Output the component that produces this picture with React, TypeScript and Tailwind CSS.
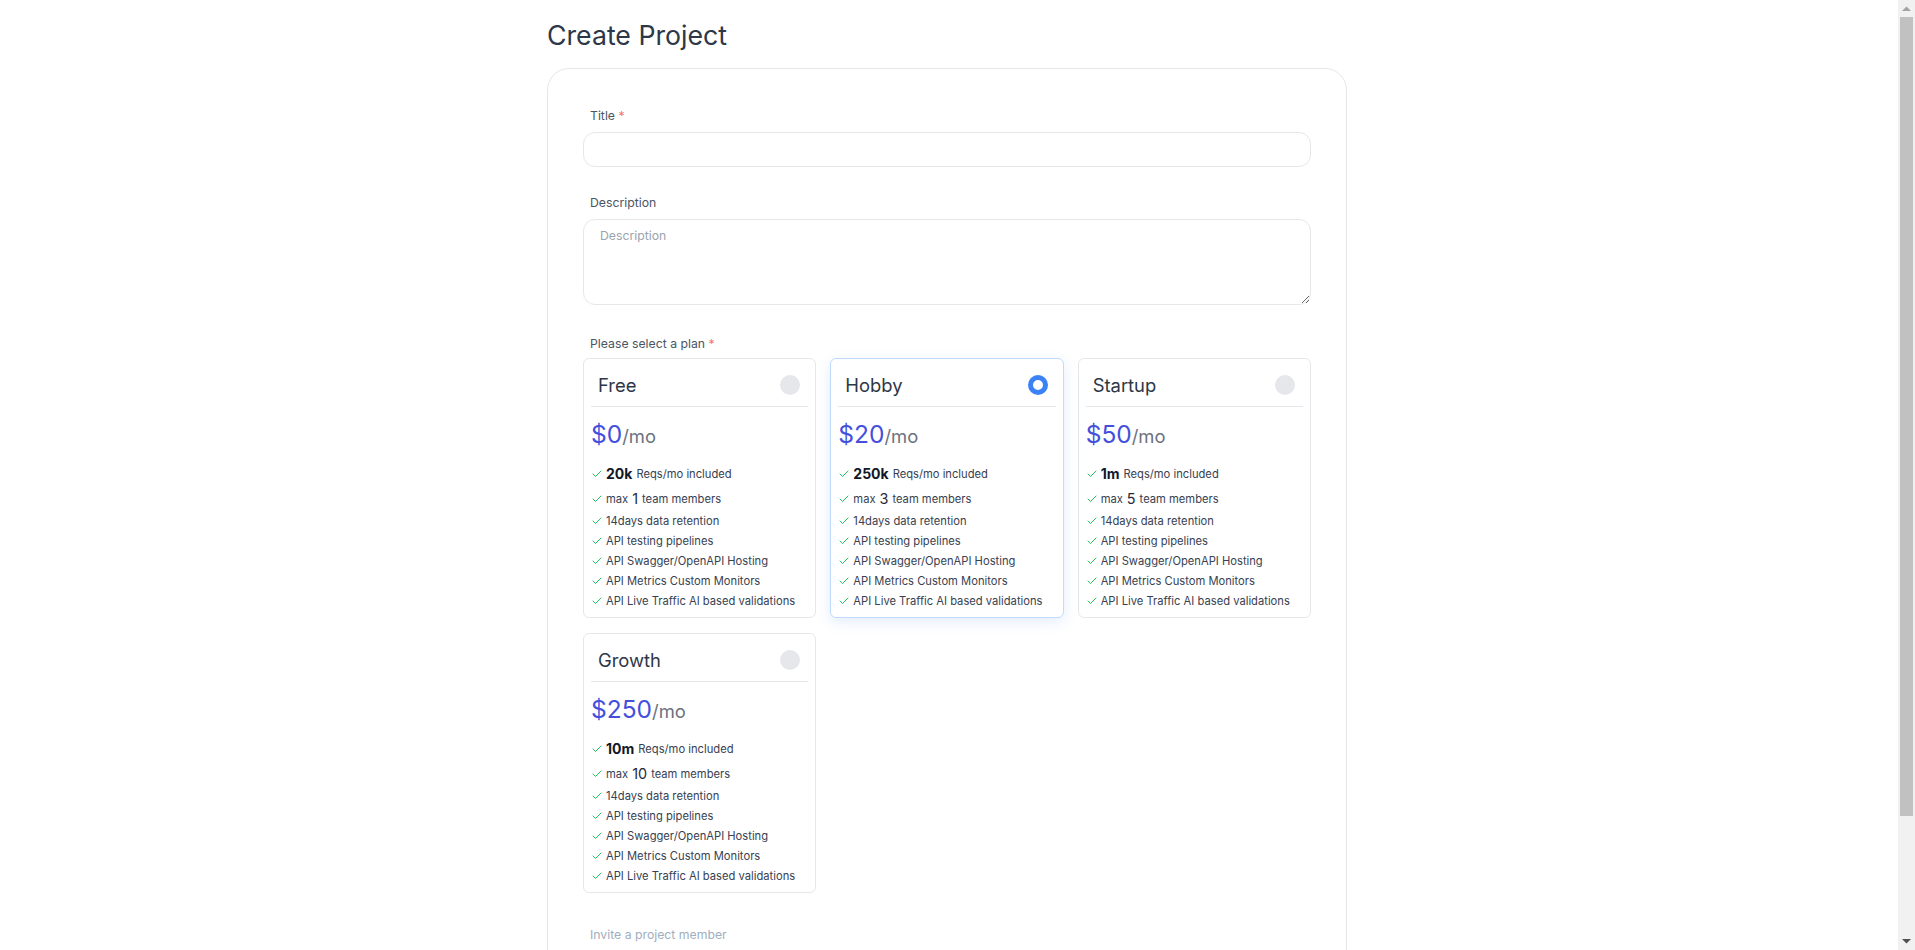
import React from "react";

type Plan = {
  name: string;
  price: string;
  reqs: string;
  members: string;
  selected?: boolean;
};

const plans: Plan[] = [
  { name: "Free", price: "$0", reqs: "20k", members: "1" },
  { name: "Hobby", price: "$20", reqs: "250k", members: "3", selected: true },
  { name: "Startup", price: "$50", reqs: "1m", members: "5" },
  { name: "Growth", price: "$250", reqs: "10m", members: "10" },
];

const features = [
  "14days data retention",
  "API testing pipelines",
  "API Swagger/OpenAPI Hosting",
  "API Metrics Custom Monitors",
  "API Live Traffic AI based validations",
];

function Check() {
  return (
    <svg
      width="12"
      height="12"
      viewBox="0 0 24 24"
      fill="none"
      stroke="#22c55e"
      strokeWidth="2"
      strokeLinecap="round"
      strokeLinejoin="round"
      className="shrink-0"
    >
      <path d="M20 6 9 17l-5-5" />
    </svg>
  );
}

function PlanCard({ plan }: { plan: Plan }) {
  return (
    <div
      className={
        plan.selected
          ? "rounded-md border border-[#bfdbfe] bg-white px-[7px] pb-2 shadow-[0_4px_14px_rgba(59,130,246,0.14)]"
          : "rounded-md border border-[#e5e7eb] bg-white px-[7px] pb-2"
      }
    >
      <div className="flex h-[48px] items-center justify-between border-b border-[#e5e7eb] pl-[7px] pr-2 pt-1">
        <span className="text-[18.4px] leading-[24px] text-[#2d3748]">{plan.name}</span>
        {plan.selected ? (
          <span className="h-5 w-5 rounded-full border-[5px] border-[#3b82f6] bg-white" />
        ) : (
          <span className="h-5 w-5 rounded-full bg-[#e5e7eb]" />
        )}
      </div>
      <div className="mt-[11px] flex items-baseline">
        <span className="text-[24.5px] leading-[32px] text-[#4450dc]">{plan.price}</span>
        <span className="text-[18.4px] leading-[32px] text-[#6b7280]">/mo</span>
      </div>
      <ul className="mt-[11px] flex flex-col gap-1 text-[11.2px] leading-[16px] text-[#374151]">
        <li className="flex h-[22px] items-center gap-[3px]">
          <Check />
          <span className="text-[14px] font-bold leading-[22px] text-[#111827]">{plan.reqs}</span>
          <span className="ml-[1px]">Reqs/mo included</span>
        </li>
        <li className="flex h-[20px] items-center gap-[3px]">
          <Check />
          <span>max</span>
          <span className="mx-[1px] text-[14.4px] leading-[20px] text-[#1f2937]">{plan.members}</span>
          <span>team members</span>
        </li>
        {features.map((f) => (
          <li key={f} className="flex h-[16px] items-center gap-[3px]">
            <Check />
            <span>{f}</span>
          </li>
        ))}
      </ul>
    </div>
  );
}

function FakeScrollbar() {
  return (
    <div className="flex h-screen w-[17px] shrink-0 flex-col bg-[#f1f1f1]">
      <div className="flex h-[17px] items-center justify-center">
        <svg width="9" height="5" viewBox="0 0 9 5">
          <path d="M0 5 L4.5 0.5 L9 5 Z" fill="#a3a3a3" />
        </svg>
      </div>
      <div className="flex flex-1 flex-col px-[2px]">
        <div className="h-[799px] bg-[#c1c1c1]" />
      </div>
      <div className="flex h-[17px] items-center justify-center">
        <svg width="9" height="5" viewBox="0 0 9 5">
          <path d="M0 0 L4.5 4.5 L9 0 Z" fill="#505050" />
        </svg>
      </div>
    </div>
  );
}

export default function App() {
  return (
    <div className="flex h-screen overflow-hidden bg-white font-['Inter',sans-serif]">
      <div className="h-screen flex-1 overflow-y-auto [scrollbar-width:none]">
        <div className="mx-auto w-[804px] pb-[64px]">
          <h1 className="mt-[19px] text-[26.7px] font-normal leading-[32px] text-[#2d3748]">
            Create Project
          </h1>
          <div className="mt-[17px] w-[800px] rounded-[22px] border border-[#e5e7eb] bg-white px-[35px] pb-[38px] pt-[39px]">
            <label className="block pl-[7px] text-[12.25px] leading-[16px] text-[#4b5563]">
              Title <span className="text-[#f87171]">*</span>
            </label>
            <input
              type="text"
              className="mt-[8px] block h-[35px] w-full rounded-xl border border-[#e5e7eb] px-4 text-[12px] outline-none"
            />

            <label className="mt-[28px] block pl-[7px] text-[12.25px] leading-[16px] text-[#4b5563]">
              Description
            </label>
            <textarea
              placeholder="Description"
              className="mt-[8px] block h-[86px] w-full rounded-xl border border-[#e5e7eb] px-4 pt-2 text-[12.25px] leading-[16px] text-[#374151] outline-none placeholder:text-[#9ca3af]"
            />

            <label className="mt-[31px] block pl-[7px] text-[12.25px] leading-[16px] text-[#4b5563]">
              Please select a plan <span className="text-[#f87171]">*</span>
            </label>
            <div className="mt-[6px] grid grid-cols-3 gap-x-[14px] gap-y-[15px]">
              {plans.map((p) => (
                <PlanCard key={p.name} plan={p} />
              ))}
            </div>

            <label className="mt-[34px] block pl-[7px] text-[12.25px] leading-[16px] text-[#a0aec0]">
              Invite a project member
            </label>
            <input
              type="email"
              placeholder="Email"
              className="mt-[9px] block h-[35px] w-full rounded-xl border border-[#e5e7eb] px-4 text-[12px] outline-none placeholder:text-[#9ca3af]"
            />
          </div>
        </div>
      </div>
      <FakeScrollbar />
    </div>
  );
}
